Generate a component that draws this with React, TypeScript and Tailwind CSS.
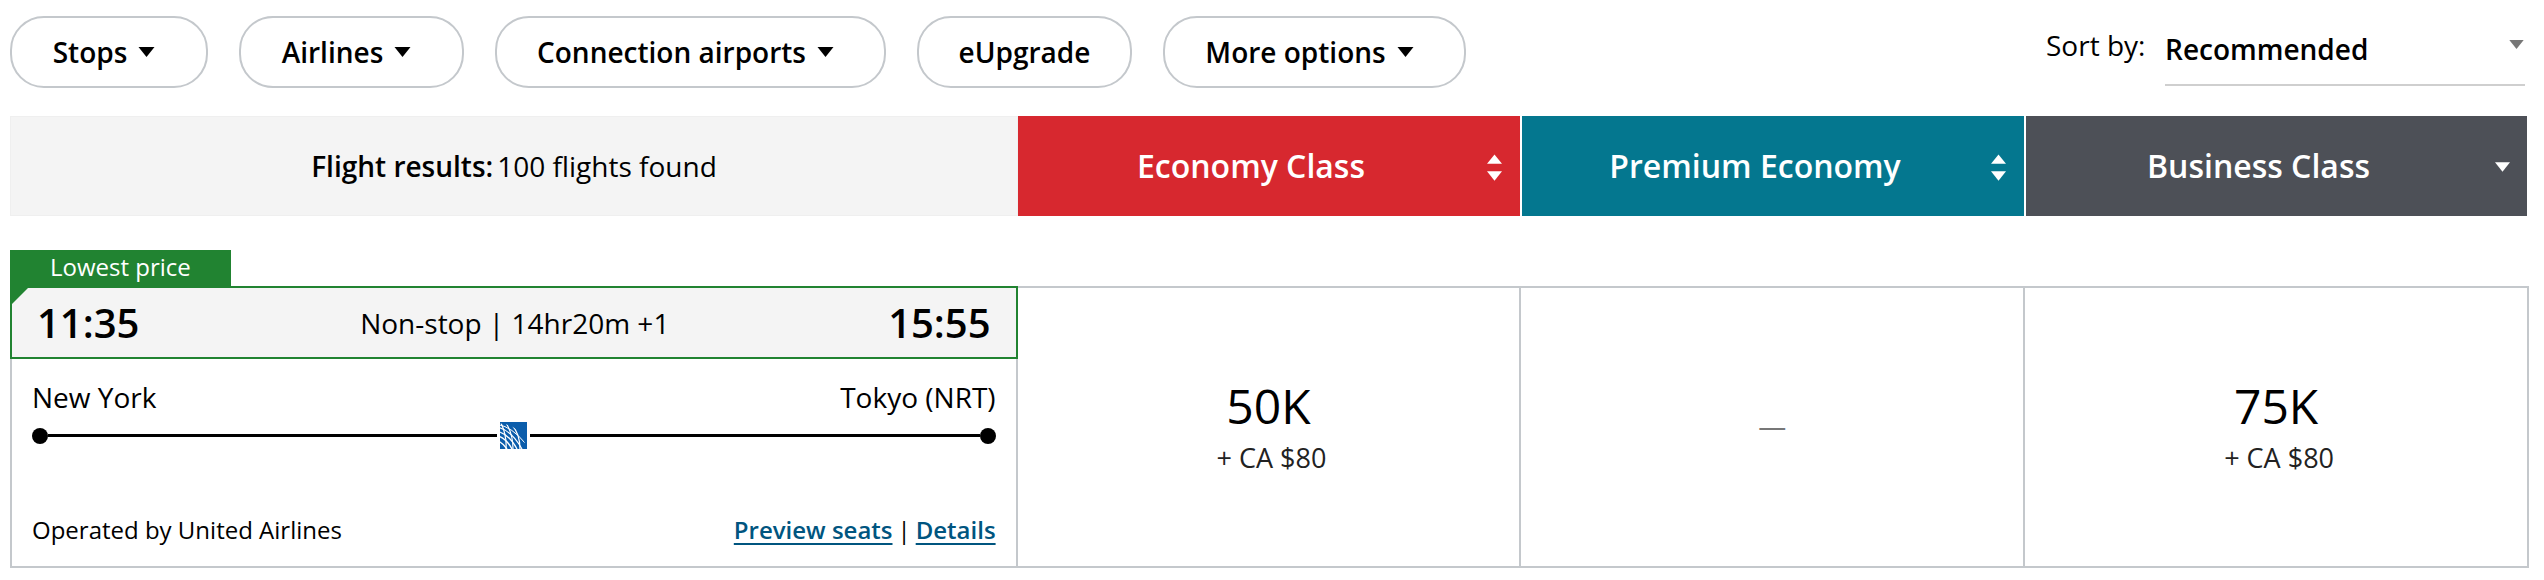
import React from "react";

const filters = [
	{ label: "Stops", width: "w-[198px]", caret: true },
	{ label: "Airlines", width: "w-[225px]", caret: true },
	{ label: "Connection airports", width: "w-[391px]", caret: true },
	{ label: "eUpgrade", width: "w-[215px]", caret: false },
	{ label: "More options", width: "w-[303px]", caret: true },
];

function Caret({ className }: { className: string }) {
	return (
		<svg viewBox="0 0 16 10" className={className} fill="currentColor">
			<path d="M0 0h16L8 10z" />
		</svg>
	);
}

function SortArrows() {
	return (
		<svg viewBox="0 0 16 28" className="w-[15px] h-[27px] text-white" fill="currentColor">
			<path d="M8 0l8 10H0z" />
			<path d="M0 18h16L8 28z" />
		</svg>
	);
}

function UnitedLogo() {
	return (
		<svg viewBox="0 0 27 27" className="w-[27px] h-[27px] shrink-0">
			<defs>
				<clipPath id="globe">
					<circle cx="0" cy="27" r="25.5" />
				</clipPath>
			</defs>
			<rect width="27" height="27" fill="#0b5dab" />
			<g clipPath="url(#globe)" fill="none" stroke="#fff">
				<path d="M-2 2.5Q12 5 25 21" strokeWidth="1" />
				<path d="M-2 5.5Q11 8 22 27" strokeWidth="1.2" />
				<path d="M-2 9.5Q9 12 17 27" strokeWidth="1.3" />
				<path d="M-2 14Q6 16 12 27" strokeWidth="1.4" />
				<path d="M-2 19Q3 21 7 27" strokeWidth="1.4" />
				<path d="M1 1Q7 14 6 27" strokeWidth="1.2" />
				<path d="M6 1Q13 12 13 27" strokeWidth="1.2" />
				<path d="M12 3Q20 12 20 27" strokeWidth="1.2" />
			</g>
		</svg>
	);
}

function PriceCell({ miles, cash }: { miles: string; cash: string }) {
	return (
		<div className="w-[504px] border-r-2 border-[#c4c8cc] flex flex-col items-center pt-[86px]">
			<div className="text-[48px] leading-[64px]">{miles}</div>
			<div className="text-[27px] leading-[36px] mt-[2px] ml-[6px] text-[#222]">{cash}</div>
		</div>
	);
}

export default function App() {
	return (
		<div className="w-[2544px] h-[580px] bg-white text-black pl-[10px] font-['Open_Sans',sans-serif] overflow-hidden">
			{/* filters + sort */}
			<div className="flex h-[116px] pt-[16px]">
				<div className="flex gap-[31px]">
					{filters.map((f) => (
						<button
							key={f.label}
							className={`${f.width} ${f.caret ? "pr-[10px]" : ""} h-[72px] rounded-[34px] border-2 border-[#c4c8cc] flex items-center justify-center gap-[11px] text-[28px] font-semibold`}
						>
							{f.label}
							{f.caret && <Caret className="w-[17px] h-[10px]" />}
						</button>
					))}
				</div>
				<div className="ml-[580px] flex">
					<span className="text-[28px] leading-[60px] -mt-[1px] w-[119px]">Sort by:</span>
					<div className="w-[360px] h-[70px] border-b-2 border-[#cfcfcf] flex justify-between pr-[1px] pt-[23px]">
						<span className="text-[28px] leading-[38px] font-semibold -mt-[9px]">Recommended</span>
						<Caret className="w-[15px] h-[9px] text-[#777] mt-[1px]" />
					</div>
				</div>
			</div>

			{/* header row */}
			<div className="flex h-[100px] w-[2517px]">
				<div className="w-[1008px] bg-[#f4f4f4] border border-[#efefef] flex items-center justify-center text-[28px]">
					<span className="font-semibold mr-[4px]">Flight results:</span>
					100 flights found
				</div>
				<div className="w-[502px] bg-[#d7282f] text-white relative flex items-center justify-center pr-[36px] text-[32px] font-semibold mr-[2px]">
					Economy Class
					<div className="absolute right-[18px] top-[38px]">
						<SortArrows />
					</div>
				</div>
				<div className="w-[502px] bg-[#04778f] text-white relative flex items-center justify-center pr-[36px] text-[32px] font-semibold mr-[2px]">
					Premium Economy
					<div className="absolute right-[18px] top-[38px]">
						<SortArrows />
					</div>
				</div>
				<div className="w-[501px] bg-[#4d5057] text-white relative flex items-center justify-center pr-[36px] text-[32px] font-semibold">
					Business Class
					<div className="absolute right-[17px] top-[46px]">
						<Caret className="w-[15px] h-[10px] text-white" />
					</div>
				</div>
			</div>

			{/* result row */}
			<div className="mt-[34px] w-[2519px]">
				<div className="w-[221px] h-[36px] bg-[#218331] text-white text-[24px] leading-[34px] pl-[40px]">
					Lowest price
				</div>
				<div className="flex h-[282px] border-t-2 border-b-2 border-[#c4c8cc]">
					<div className="w-[1008px] border-l-2 border-r-2 border-[#c4c8cc] flex flex-col -mt-[2px]">
						<div className="relative -mx-[2px] h-[73px] bg-[#f4f4f4] border-2 border-[#218331] flex items-center justify-between px-[25px]">
							<svg viewBox="0 0 16 16" className="absolute left-0 top-0 w-[16px] h-[16px]" fill="#218331">
								<path d="M0 0h16L0 16z" />
							</svg>
							<span className="text-[40px] font-semibold">11:35</span>
							<span className="text-[28px] ml-[2px]">Non-stop | 14hr20m +1</span>
							<span className="text-[40px] font-semibold">15:55</span>
						</div>
						<div className="flex justify-between px-[20px] pt-[19px] text-[28px] leading-[38px]">
							<span>New York</span>
							<span>Tokyo (NRT)</span>
						</div>
						<div className="flex items-center mx-[20px] mt-[6px] h-[27px]">
							<div className="w-[16px] h-[16px] rounded-full bg-black shrink-0" />
							<div className="flex-1 h-[3px] bg-black" />
							<div className="mx-[3px]">
								<UnitedLogo />
							</div>
							<div className="flex-1 h-[3px] bg-black" />
							<div className="w-[16px] h-[16px] rounded-full bg-black shrink-0" />
						</div>
						<div className="flex justify-between items-center px-[20px] mt-[64px] text-[24px] leading-[34px]">
							<span>Operated by United Airlines</span>
							<span>
								<a className="font-semibold text-[#00557f] underline decoration-2 underline-offset-4">Preview seats</a>
								<span className="mx-[5px]">|</span>
								<a className="font-semibold text-[#00557f] underline decoration-2 underline-offset-4">Details</a>
							</span>
						</div>
					</div>
					<PriceCell miles="50K" cash="+ CA $80" />
					<div className="w-[504px] border-r-2 border-[#c4c8cc] flex justify-center pt-[118px] text-[28px] leading-[38px] text-[#777]">
						—
					</div>
					<PriceCell miles="75K" cash="+ CA $80" />
				</div>
			</div>
		</div>
	);
}
